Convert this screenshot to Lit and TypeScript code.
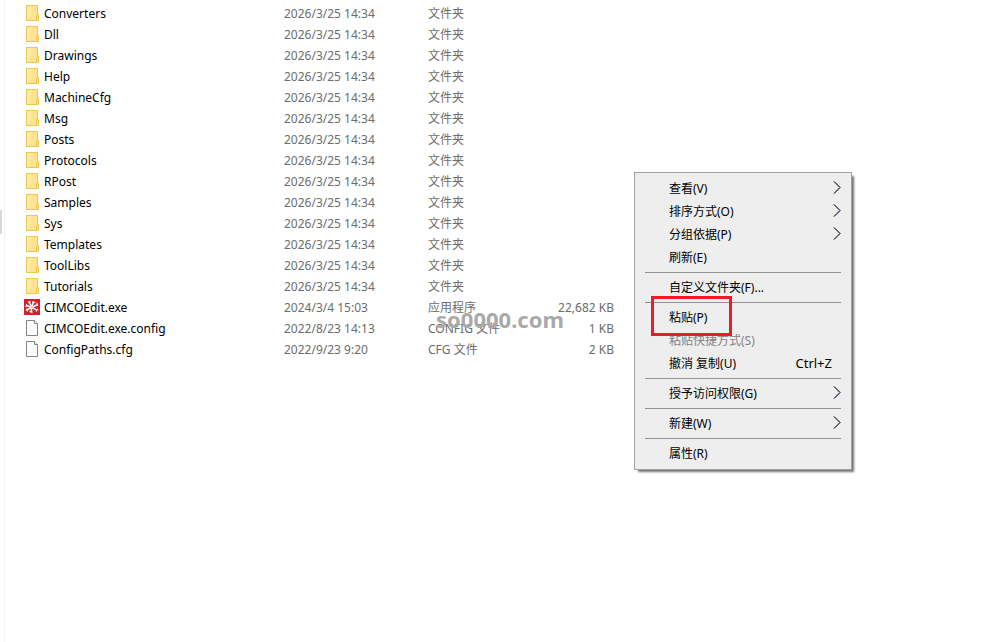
import { LitElement, html, svg, css, nothing } from "lit";
import { customElement, property } from "lit/decorators.js";

type Kind = "folder" | "exe" | "file";

interface Entry {
  name: string;
  date: string;
  type: string;
  size?: string;
  kind: Kind;
}

interface Command {
  label: string;
  shortcut?: string;
  submenu?: boolean;
  disabled?: boolean;
  marked?: boolean;
}

const folders = [
  "Converters", "Dll", "Drawings", "Help", "MachineCfg", "Msg", "Posts",
  "Protocols", "RPost", "Samples", "Sys", "Templates", "ToolLibs", "Tutorials",
];

const entries: Entry[] = [
  ...folders.map((name): Entry => ({ name, date: "2026/3/25 14:34", type: "文件夹", kind: "folder" })),
  { name: "CIMCOEdit.exe", date: "2024/3/4 15:03", type: "应用程序", size: "22,682 KB", kind: "exe" },
  { name: "CIMCOEdit.exe.config", date: "2022/8/23 14:13", type: "CONFIG 文件", size: "1 KB", kind: "file" },
  { name: "ConfigPaths.cfg", date: "2022/9/23 9:20", type: "CFG 文件", size: "2 KB", kind: "file" },
];

const groups: Command[][] = [
  [
    { label: "查看(V)", submenu: true },
    { label: "排序方式(O)", submenu: true },
    { label: "分组依据(P)", submenu: true },
    { label: "刷新(E)" },
  ],
  [{ label: "自定义文件夹(F)..." }],
  [
    { label: "粘贴(P)", marked: true },
    { label: "粘贴快捷方式(S)", disabled: true },
    { label: "撤消 复制(U)", shortcut: "Ctrl+Z" },
  ],
  [{ label: "授予访问权限(G)", submenu: true }],
  [{ label: "新建(W)", submenu: true }],
  [{ label: "属性(R)" }],
];

const shapes = {
  folder: svg`
    <rect x="2.5" y="0.5" width="11" height="15" fill="#ffe391" stroke="#eac851"/>
    <path d="M3 15V1h5L5 15z" fill="#ffe9a6"/>
    <path d="M12.5 15.5v-5l1-1h1v6z" fill="#ffe08a" stroke="#eac851"/>`,
  exe: svg`
    <rect width="16" height="16" fill="#d71f2b"/>
    <g stroke="#fff" fill="none">
      <path stroke-width="1.5" d="M9.5 2.5L8 7.5M14 5.5L8.5 8M13 11.5L8.5 8.5M7 13.5L8 8.5M2.5 11L7.5 8.5M2 6.5L7.5 8M5 2.5L7.5 7.5"/>
      <path stroke-width="1.1" d="M8 3l3.500 .5M13 3.800l.5 3M14 9.800l-2 2.700M8.800 13.200l-3.300-.8M3.500 12.500l-1.300-2.700M1.800 8l1-3M3.800 3.600l2.700-1.300"/>
    </g>`,
  file: svg`
    <path d="M2.5 0.5h8l3 3v12h-11z" fill="#fafbfb" stroke="#858585"/>
    <path d="M10.5 0.5v3h3" fill="#fff" stroke="#858585"/>`,
};

@customElement("file-list")
export class FileList extends LitElement {
  static styles = css`
    :host { display: block; }
    .list { border-collapse: collapse; table-layout: fixed; width: 590px; }
    .name-col { width: 260px; }
    .date-col { width: 144px; }
    .size-col { width: 90px; }
    .cell { padding: 0; height: 21px; line-height: 21px; text-align: left; font-weight: 400; color: #6d6d6d; white-space: nowrap; }
    .name { display: flex; gap: 4px; align-items: center; color: #000; }
    .icon { width: 16px; height: 16px; flex: none; margin-bottom: 1px; }
    .size { text-align: right; }
  `;

  render() {
    return html`<table class="list">
      <colgroup><col class="name-col" /><col class="date-col" /><col /><col class="size-col" /></colgroup>
      <tbody>
        ${entries.map((e) => html`<tr>
          <th class="cell" scope="row">
            <div class="name"><svg class="icon" viewBox="0 0 16 16" aria-hidden="true">${shapes[e.kind]}</svg><span>${e.name}</span></div>
          </th>
          <td class="cell">${e.date}</td>
          <td class="cell">${e.type}</td>
          <td class="cell size">${e.size ?? nothing}</td>
        </tr>`)}
      </tbody>
    </table>`;
  }
}

@customElement("context-menu")
export class ContextMenu extends LitElement {
  @property({ attribute: false }) groups: Command[][] = [];

  static styles = css`
    :host { display: block; box-sizing: border-box; border: 1px solid #a0a0a0; background: #eee; padding: 4px 0; box-shadow: 3px 3px 2px -1px rgba(0, 0, 0, 0.55); font-size: 12px; }
    .group + .group::before { content: ""; display: block; height: 1px; margin: 3px 10px; background: #919191; }
    .item { position: relative; display: flex; align-items: center; width: 100%; height: 23px; border: 0; margin: 0; padding: 0 10px 2px 34px; background: none; font: inherit; color: #000; text-align: left; white-space: nowrap; }
    .item:disabled { color: #838383; }
    .label { flex: 1; }
    .shortcut { font-size: 13px; padding-right: 9px; }
    .arrow { width: 8px; height: 14px; }
    .mark { position: absolute; z-index: 1; left: 16px; top: -10px; width: 81px; height: 40px; box-sizing: border-box; border: 3px solid #ed1c24; pointer-events: none; }
  `;

  render() {
    return this.groups.map((g) => html`<div class="group" role="group">
      ${g.map((c) => html`<button class="item" role="menuitem" ?disabled=${c.disabled}>
        <span class="label">${c.label}</span>
        ${c.shortcut ? html`<span class="shortcut">${c.shortcut}</span>` : nothing}
        ${c.submenu ? html`<svg class="arrow" viewBox="0 0 8 14" fill="none" aria-hidden="true">
          <path d="M0.5 0.5l6 6l-6 6" stroke="#e9a765"/>
          <path d="M1.5 0.5l6 6l-6 6" stroke="#5b9ad8"/>
          <path d="M1 0.5l6 6l-6 6" stroke="#3b2148"/>
        </svg>` : nothing}
        ${c.marked ? html`<span class="mark"></span>` : nothing}
      </button>`)}
    </div>`);
  }
}

@customElement("app-root")
export class AppRoot extends LitElement {
  static styles = css`
    :host { display: block; min-height: 100vh; background: #fff; position: relative; font: 12px "Noto Sans", "Noto Sans CJK SC", sans-serif; }
    .window { display: flex; min-height: 100vh; }
    .rail { width: 4px; border-right: 1px solid #f3f3f3; display: flex; align-items: flex-start; }
    .thumb { width: 2px; height: 24px; margin-top: 210px; background: #d9d9d9; }
    .files { flex: 1; padding: 3px 0 0 19px; }
    .menu { position: absolute; left: 634px; top: 172px; width: 218px; }
    .watermark { position: absolute; left: 436px; top: 306px; font-size: 22px; line-height: 26px; font-weight: 700; color: #a9a9a9; }
  `;

  render() {
    return html`<main class="window">
        <div class="rail"><div class="thumb"></div></div>
        <file-list class="files"></file-list>
      </main>
      <span class="watermark">so0000.com</span>
      <context-menu class="menu" role="menu" .groups=${groups}></context-menu>`;
  }
}
